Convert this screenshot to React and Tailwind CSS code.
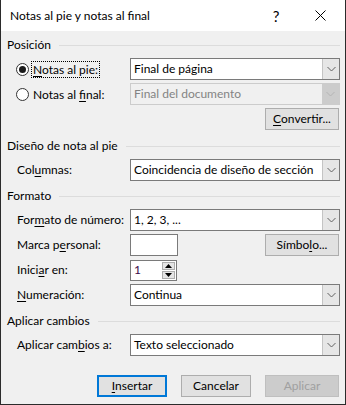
import { useState } from 'react'

const font = { fontFamily: 'Lato, "Open Sans", sans-serif' }

function Chevron({ color = '#606060' }) {
  return (
    <svg width="9" height="6" viewBox="0 0 9 6">
      <path d="M0.5 1 L4.5 5 L8.5 1" fill="none" stroke={color} strokeWidth="1" />
    </svg>
  )
}

function Combo({ value, disabled }) {
  return (
    <div
      className={`flex h-[22px] w-[210px] items-stretch border ${
        disabled ? 'border-[#cccccc] bg-[#f0f0f0] text-[#838383]' : 'border-[#7a7a7a] bg-white text-black'
      }`}
    >
      <span className="flex-1 truncate pl-[3px] leading-[20px]">{value}</span>
      <span
        className={`flex w-[17px] items-center justify-center ${
          disabled ? 'bg-[#cccccc]' : 'border-l border-[#c4c4c4] bg-[#e6e6e6]'
        }`}
      >
        <Chevron color={disabled ? '#b4b4b4' : '#606060'} />
      </span>
    </div>
  )
}

function Header({ children }) {
  return (
    <div className="flex h-4 items-center gap-[8px] pl-[6px] pr-[5px]">
      <span className="leading-4">{children}</span>
      <span className="h-px flex-1 bg-[#dcdcdc]" />
    </div>
  )
}

function Row({ label, children, className = '' }) {
  return (
    <div className={`flex h-[22px] items-center pl-[16px] ${className}`}>
      <span className="w-[113px] leading-4">{label}</span>
      {children}
    </div>
  )
}

function Btn({ children, w = 'w-[74px]', variant }) {
  const styles =
    variant === 'default'
      ? 'border-2 border-[#0078d7] bg-[#e1e1e1] text-black'
      : variant === 'disabled'
        ? 'border border-[#bfbfbf] bg-[#cccccc] text-[#a0a0a0]'
        : 'border border-[#adadad] bg-[#e1e1e1] text-black'
  return (
    <button className={`flex h-[22px] ${w} items-center justify-center leading-4 ${styles}`}>
      {children}
    </button>
  )
}

function Radio({ checked, children, focus }) {
  return (
    <div className="flex items-center">
      <span className="flex h-[13px] w-[13px] items-center justify-center rounded-full border border-[#333333] bg-white">
        {checked && <span className="h-[7px] w-[7px] rounded-full bg-[#1a1a1a]" />}
      </span>
      <span
        className={`ml-[3px] px-[1px] leading-[15px] ${
          focus ? 'outline outline-1 outline-dotted outline-black' : ''
        }`}
      >
        {children}
      </span>
    </div>
  )
}

export default function App() {
  const [start, setStart] = useState('1')

  return (
    <div
      className="flex h-[405px] w-[346px] flex-col border-x border-b border-[#2b2b2b] bg-[#f0f0f0] text-[12px] text-black"
      style={font}
    >
      {/* title bar */}
      <div className="flex h-[31px] shrink-0 items-center bg-white pl-[9px]">
        <span className="flex-1 text-[12px] leading-4">Notas al pie y notas al final</span>
        <span className="w-[46px] text-center text-[15px] leading-4">?</span>
        <span className="flex w-[46px] items-center justify-center pr-[4px]">
          <svg width="11" height="11" viewBox="0 0 11 11">
            <path d="M0.5 0.5 L10.5 10.5 M10.5 0.5 L0.5 10.5" stroke="#000" strokeWidth="1" />
          </svg>
        </span>
      </div>

      <div className="mt-[6px]">
        <Header>Posición</Header>
      </div>

      <div className="mt-[5px] flex h-[22px] items-center pl-[15px]">
        <div className="w-[114px]">
          <Radio checked focus>
            <u className="underline-offset-2">N</u>otas al pie:
          </Radio>
        </div>
        <Combo value="Final de página" />
      </div>
      <div className="mt-[3px] flex h-[22px] items-center pl-[15px]">
        <div className="w-[114px]">
          <Radio>
            Notas al <u className="underline-offset-2">f</u>inal:
          </Radio>
        </div>
        <Combo value="Final del documento" disabled />
      </div>
      <div className="mt-[3px] flex justify-end pr-[6px]">
        <Btn>
          <u className="underline-offset-2">C</u>onvertir...
        </Btn>
      </div>

      <div className="mt-[8px]">
        <Header>Diseño de nota al pie</Header>
      </div>
      <Row
        className="mt-[5px]"
        label={
          <>
            Col<u className="underline-offset-2">u</u>mnas:
          </>
        }
      >
        <Combo value="Coincidencia de diseño de sección" />
      </Row>

      <div className="mt-[7px]">
        <Header>Formato</Header>
      </div>
      <Row
        className="mt-[5px]"
        label={
          <>
            For<u className="underline-offset-2">m</u>ato de número:
          </>
        }
      >
        <Combo value="1, 2, 3, ..." />
      </Row>
      <Row
        className="mt-[3px]"
        label={
          <>
            Marca p<u className="underline-offset-2">e</u>rsonal:
          </>
        }
      >
        <div className="h-[22px] w-[48px] border border-[#7a7a7a] bg-white" />
        <div className="ml-auto pr-[6px]">
          <Btn>
            Símbo<u className="underline-offset-2">l</u>o...
          </Btn>
        </div>
      </Row>
      <Row
        className="mt-[3px]"
        label={
          <>
            Inici<u className="underline-offset-2">a</u>r en:
          </>
        }
      >
        <div className="flex h-[21px] w-[47px] border border-[#7a7a7a] bg-white">
          <input
            value={start}
            onChange={(e) => setStart(e.target.value)}
            className="w-[30px] bg-transparent pl-[3px] text-[#3c0a49] outline-none"
          />
          <div className="flex flex-1 flex-col gap-px p-px">
            <span className="flex flex-1 items-center justify-center border border-[#adadad] bg-[#e5e5e5]">
              <svg width="7" height="4" viewBox="0 0 7 4">
                <path d="M3.5 0 L7 4 L0 4 Z" fill="#000" />
              </svg>
            </span>
            <span className="flex flex-1 items-center justify-center border border-[#adadad] bg-[#e5e5e5]">
              <svg width="7" height="4" viewBox="0 0 7 4">
                <path d="M0 0 L7 0 L3.5 4 Z" fill="#000" />
              </svg>
            </span>
          </div>
        </div>
      </Row>
      <Row
        className="mt-[3px]"
        label={
          <>
            <u className="underline-offset-2">N</u>umeración:
          </>
        }
      >
        <Combo value="Continua" />
      </Row>

      <div className="mt-[7px]">
        <Header>Aplicar cambios</Header>
      </div>
      <Row
        className="mt-[5px]"
        label={
          <>
            Aplicar cam<u className="underline-offset-2">b</u>ios a:
          </>
        }
      >
        <Combo value="Texto seleccionado" />
      </Row>

      <div className="mt-[19px] flex justify-end gap-[14px] pr-[6px]">
        <Btn w="w-[70px]" variant="default">
          <u className="underline-offset-2">I</u>nsertar
        </Btn>
        <Btn w="w-[70px]">Cancelar</Btn>
        <Btn variant="disabled">Aplicar</Btn>
      </div>
    </div>
  )
}
